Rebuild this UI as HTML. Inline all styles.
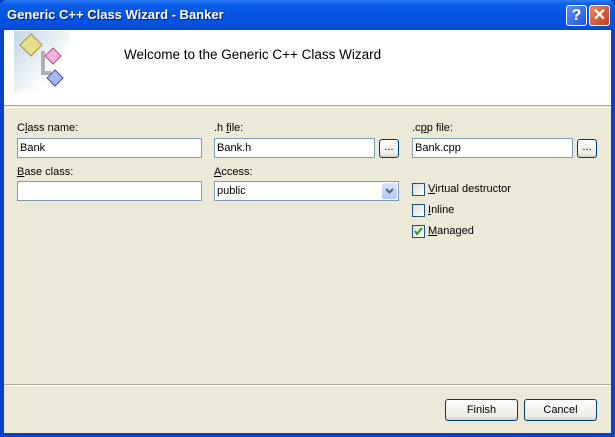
<!DOCTYPE html>
<html><head><style>
*{margin:0;padding:0;box-sizing:border-box}
body{width:615px;height:437px;overflow:hidden;font-family:Tahoma,"Liberation Sans",sans-serif;font-size:11px;background:#0842c8;position:relative}
.a{position:absolute}
.title{left:0;top:0;width:615px;height:30px;border-radius:7px 7px 0 0;background:linear-gradient(#2e7cf6 0%,#0a5ee8 15%,#0554e3 50%,#0350dc 85%,#0a47c0 100%)}
.tt{left:7px;top:7px;color:#fff;font-weight:bold;font-size:13px;text-shadow:1px 1px #0a1e6e}
.client{left:4px;top:30px;width:607px;height:403px;background:#ece9d8}
.hdr{left:4px;top:30px;width:607px;height:76px;background:#fff;border-bottom:1px solid #aca899}
.hdr2{left:4px;top:107px;width:607px;height:1px;background:#fff}
.lbl{color:#000}
.in{background:#fff;border:1px solid #7f9db9;height:20px;padding:3px 2px}
.btn{border:1px solid #003c74;border-radius:3px;background:linear-gradient(#fff,#ecebe6 80%,#d6d0c5);text-align:center}
.cb{width:13px;height:13px;border:1px solid #1c5180;background:linear-gradient(135deg,#dcdcd7,#fff)}
u{text-decoration:underline}
</style></head><body>
<div class="a title"></div>
<div class="a tt">Generic C++ Class Wizard - Banker</div>
<div class="a" style="left:566px;top:5px;width:21px;height:21px;border:1px solid #fff;border-radius:3px;background:linear-gradient(135deg,#5b8df8,#2457d8);color:#fff;font:bold 16px 'Liberation Sans';text-align:center;line-height:19px">?</div>
<div class="a" style="left:589px;top:5px;width:21px;height:21px;border:1px solid #fff;border-radius:3px;background:linear-gradient(135deg,#e8886a,#c63d14);color:#fff;font:bold 16px 'Liberation Sans';text-align:center;line-height:19px">✕</div>
<div class="a client"></div>
<div class="a hdr"></div>
<div class="a hdr2"></div>
<svg class="a" style="left:14px;top:31px" width="55" height="62">
<defs><linearGradient id="g" x1="0" y1="0" x2="1" y2="1"><stop offset="0" stop-color="#c4d4e4"/><stop offset="0.7" stop-color="#fff"/></linearGradient></defs>
<rect width="55" height="62" fill="url(#g)"/>
<path d="M29 20v22h8" stroke="#b0b0b0" stroke-width="4" fill="none"/>
<path d="M6 14l11-11 11 11-11 11z" fill="#e8dd8a" stroke="#a09440"/>
<path d="M31 25l8-8 8 8-8 8z" fill="#f2b4da" stroke="#b05090"/>
<path d="M33 47l8-8 8 8-8 8z" fill="#a8b8f0" stroke="#4050a0"/>
</svg>
<div class="a" style="left:124px;top:47px;font-size:13.5px">Welcome to the Generic C++ Class Wizard</div>
<div class="a lbl" style="left:17px;top:122px">C<u>l</u>ass name:</div>
<div class="a in" style="left:17px;top:138px;width:185px">Bank</div>
<div class="a lbl" style="left:214px;top:122px">.h <u>f</u>ile:</div>
<div class="a in" style="left:214px;top:138px;width:161px">Bank.h</div>
<div class="a btn" style="left:379px;top:139px;width:20px;height:19px;line-height:15px">...</div>
<div class="a lbl" style="left:412px;top:122px">.c<u>p</u>p file:</div>
<div class="a in" style="left:412px;top:138px;width:161px">Bank.cpp</div>
<div class="a btn" style="left:577px;top:139px;width:20px;height:19px;line-height:15px">...</div>
<div class="a lbl" style="left:17px;top:166px"><u>B</u>ase class:</div>
<div class="a in" style="left:17px;top:181px;width:185px"></div>
<div class="a lbl" style="left:214px;top:166px"><u>A</u>ccess:</div>
<div class="a in" style="left:214px;top:181px;width:185px">public</div>
<div class="a" style="left:382px;top:183px;width:15px;height:16px;border-radius:2px;background:linear-gradient(#dbe6fc,#b6c9f4)"><svg width="15" height="16" style="position:absolute;left:0;top:0"><path d="M4 6l3.5 3.5L11 6" stroke="#4d6185" stroke-width="2" fill="none"/></svg></div>
<div class="a cb" style="left:412px;top:183px"></div>
<div class="a lbl" style="left:428px;top:183px"><u>V</u>irtual destructor</div>
<div class="a cb" style="left:412px;top:204px"></div>
<div class="a lbl" style="left:428px;top:204px"><u>I</u>nline</div>
<div class="a cb" style="left:412px;top:225px"><svg width="11" height="11" style="position:absolute;left:0;top:0"><path d="M2 5l2 3 5-6" stroke="#21a121" stroke-width="2" fill="none"/></svg></div>
<div class="a lbl" style="left:428px;top:225px"><u>M</u>anaged</div>
<div class="a" style="left:4px;top:384px;width:607px;height:1px;background:#aca899"></div>
<div class="a" style="left:4px;top:385px;width:607px;height:1px;background:#fff"></div>
<div class="a btn" style="left:445px;top:399px;width:73px;height:22px;line-height:20px">Finish</div>
<div class="a btn" style="left:524px;top:399px;width:73px;height:22px;line-height:20px">Cancel</div>
</body></html>
